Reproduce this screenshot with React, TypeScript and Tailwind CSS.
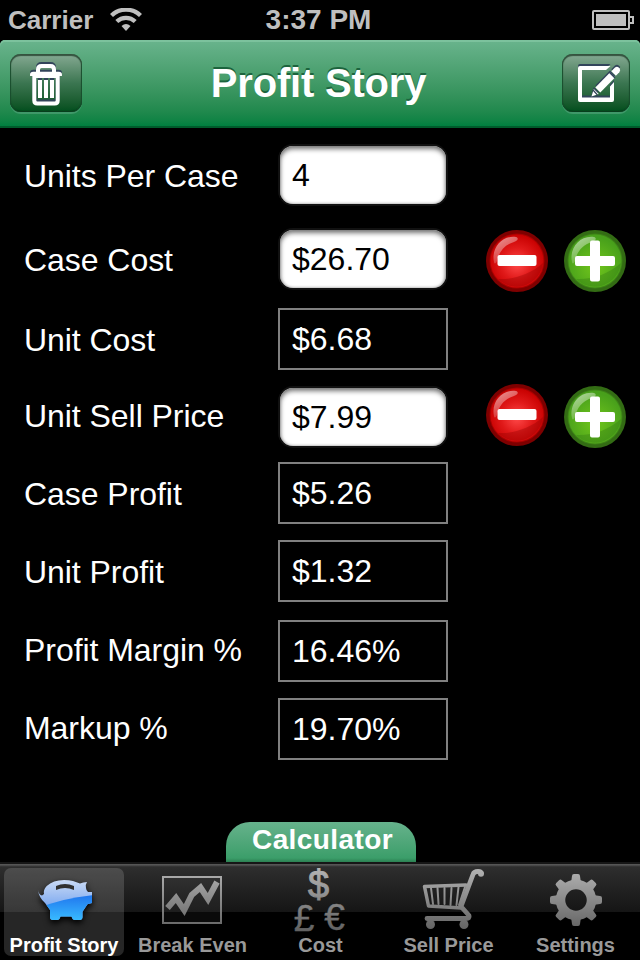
import type { ReactNode } from 'react';

type Row = {
  label: string;
  value: string;
  editable?: boolean;
  rowClass: string;
  labelClass: string;
  minusClass?: string;
  plusClass?: string;
};

const rows: Row[] = [
  { label: 'Units Per Case', value: '4', editable: true, rowClass: 'mt-4', labelClass: 'pt-0.5' },
  { label: 'Case Cost', value: '$26.70', editable: true, rowClass: 'mt-[22px]', labelClass: 'pt-0.5', minusClass: 'mt-1', plusClass: 'mt-1' },
  { label: 'Unit Cost', value: '$6.68', rowClass: 'mt-[18px]', labelClass: 'pt-0.5' },
  { label: 'Unit Sell Price', value: '$7.99', editable: true, rowClass: 'mt-4', labelClass: 'pb-0.5', minusClass: '-mt-1', plusClass: 'mt-0' },
  { label: 'Case Profit', value: '$5.26', rowClass: 'mt-3.5', labelClass: 'pt-0.5' },
  { label: 'Unit Profit', value: '$1.32', rowClass: 'mt-4', labelClass: 'pt-0.5' },
  { label: 'Profit Margin %', value: '16.46%', rowClass: 'mt-[18px]', labelClass: 'pb-0.5' },
  { label: 'Markup %', value: '19.70%', rowClass: 'mt-4', labelClass: 'pb-0.5' },
];

const Gradients = () => (
  <svg width="0" height="0" className="absolute">
    <defs>
      <linearGradient id="tabGray" gradientUnits="userSpaceOnUse" x1="0" y1="868" x2="0" y2="932">
        <stop offset="0" stopColor="#b4b4b4" />
        <stop offset="1" stopColor="#606060" />
      </linearGradient>
      <linearGradient id="pigTop" gradientUnits="userSpaceOnUse" x1="0" y1="879" x2="0" y2="906">
        <stop offset="0" stopColor="#cddcf5" />
        <stop offset="1" stopColor="#7eaaf0" />
      </linearGradient>
      <linearGradient id="pigBottom" gradientUnits="userSpaceOnUse" x1="0" y1="895" x2="0" y2="920">
        <stop offset="0" stopColor="#2076ee" />
        <stop offset="1" stopColor="#38baff" />
      </linearGradient>
      <radialGradient id="redBall" cx="0.5" cy="0.55" r="0.55">
        <stop offset="0" stopColor="#ff4a4a" />
        <stop offset="0.55" stopColor="#e01919" />
        <stop offset="1" stopColor="#c80000" />
      </radialGradient>
      <radialGradient id="greenBall" cx="0.5" cy="0.6" r="0.55">
        <stop offset="0" stopColor="#71c61c" />
        <stop offset="1" stopColor="#48a01b" />
      </radialGradient>
      <linearGradient id="gloss" x1="0" y1="0.1" x2="0.5" y2="1">
        <stop offset="0" stopColor="#fff" stopOpacity="0.6" />
        <stop offset="1" stopColor="#fff" stopOpacity="0.08" />
      </linearGradient>
    </defs>
  </svg>
);

const RoundButton = ({ kind, className = '' }: { kind: 'minus' | 'plus'; className?: string }) => {
  const minus = kind === 'minus';
  return (
    <button className={`shrink-0 ${className}`} aria-label={kind}>
      <svg width="62" height="62" viewBox="0 0 62 62" className="block">
        <circle cx="31" cy="31" r="31" fill={minus ? '#7e0000' : '#336c14'} />
        <circle cx="31" cy="31" r="27.5" fill={minus ? '#a90000' : '#3d8516'} />
        <circle cx="31" cy="31" r="26.5" fill={minus ? 'url(#redBall)' : 'url(#greenBall)'} />
        <path d="M12 49C27 50 45 44 57 33a26.500 26.500 0 0 1-45 16Z" fill={minus ? '#8f0000' : '#2f7510'} opacity="0.35" />
        <path d="M8 32C5 18 16 5 30 7c3 1 2 4-2 5C18 15 13 22 11 31c-1 3-3 3-3 1Z" fill="url(#gloss)" />
        {minus ? (
          <rect x="11.500" y="25" width="39" height="11" rx="2" fill="#fff" />
        ) : (
          <path d="M28 10.500h6a2 2 0 0 1 2 2V26h13a2 2 0 0 1 2 2v6a2 2 0 0 1-2 2H36v13.500a2 2 0 0 1-2 2h-6a2 2 0 0 1-2-2V36H13a2 2 0 0 1-2-2v-6a2 2 0 0 1 2-2h13V12.500a2 2 0 0 1 2-2Z" fill="#fff" />
        )}
      </svg>
    </button>
  );
};

const TrashShape = ({ color }: { color: string }) => (
  <g fill="none" stroke={color}>
    <path d="M28 19v-3.500q0-3.500 3.500-3.500h9q3.500 0 3.500 3.500V19" strokeWidth="4" />
    <path d="M21.800 22v-1.500q0-1 1.500-1h25.400q1.500 0 1.500 1V22" strokeWidth="3.500" />
    <path d="M24.300 20v26.500q0 3 3 3h17.400q3 0 3-3V20" strokeWidth="4" />
    <path d="M24 22h24" strokeWidth="4" />
    <path d="M30 26v18M36 26v18M42 26v18" strokeWidth="4" />
  </g>
);

const ComposeShape = ({ color }: { color: string }) => (
  <g>
    <path d="M48.500 12l-4.500 4H20v27.500h28V32.500l4-4.500V46q0 2-2 2H18q-2 0-2-2V14q0-2 2-2Z" fill={color} />
    <path d="M29.500 42.500l2.300-7.500 5 5Z" fill={color} />
    <path d="M33.300 33.500L48 18.500l5 5L38.300 38.500Z" fill={color} />
    <path d="M49.300 17.200l3.700-3.700q2-1.500 3.700 0l.8.8q1.500 2-.2 3.900l-3.400 3.600Z" fill={color} />
  </g>
);

const NavButton = ({ width, label, children }: { width: string; label: string; children: ReactNode }) => (
  <button
    aria-label={label}
    className={`h-[58px] ${width} rounded-[11px] bg-gradient-to-b from-[#86aa94] via-[#3b7651] to-[#004e1d] shadow-[inset_0_2px_1px_#35533f,inset_1px_0_1px_#174d2c,inset_-1px_0_1px_#174d2c,inset_0_-1px_1px_#063b1b,0_2px_0_#3f9869]`}
  >
    {children}
  </button>
);

const StatusBar = () => (
  <div className="flex h-10 items-center text-[#bfbfbf]">
    <div className="flex w-[220px] items-center pl-2">
      <span className="text-[26px] leading-10 font-bold">Carrier</span>
      <svg width="32" height="24" viewBox="0 0 32 24" className="ml-[17px] shrink-0">
        <path d="M1.500 7.500a21 21 0 0 1 29 0" fill="none" stroke="currentColor" strokeWidth="4.300" />
        <path d="M6.800 13.600a13.300 13.300 0 0 1 18.400 0" fill="none" stroke="currentColor" strokeWidth="4.200" />
        <path d="M11.500 18q4.500-4 9 0L16 23Z" fill="currentColor" />
      </svg>
    </div>
    <div className="w-[200px] pr-[3px] text-center text-[28px] leading-10 font-bold">3:37 PM</div>
    <div className="flex w-[220px] justify-end pr-1.5">
      <svg width="42" height="20" viewBox="0 0 42 20">
        <rect x="1" y="1" width="36" height="18" rx="1" fill="none" stroke="currentColor" strokeWidth="2" />
        <rect x="4" y="4" width="30" height="12" fill="currentColor" />
        <path d="M38 7h3v6h-3" fill="none" stroke="currentColor" strokeWidth="2" />
      </svg>
    </div>
  </div>
);

const NavBar = () => (
  <div className="flex h-[88px] items-start justify-between rounded-t-[5px] border-b-2 border-[#005c2c] bg-gradient-to-b from-[#69b48d] to-[#008040] px-2.5 pt-3.5 shadow-[inset_0_2px_0_#7cc29d]">
    <NavButton width="w-[72px]" label="Delete">
      <svg width="72" height="58" viewBox="0 0 72 58">
        <g transform="translate(0 -2)"><TrashShape color="#32445a" /></g>
        <TrashShape color="#fff" />
      </svg>
    </NavButton>
    <h1 className="pr-[7px] text-[40px] leading-[58px] font-bold tracking-[-0.2px] text-white [text-shadow:0_-2px_0_#1c643d]">Profit Story</h1>
    <NavButton width="w-[68px]" label="Edit">
      <svg width="68" height="58" viewBox="0 0 68 58">
        <g transform="translate(0 -2)"><ComposeShape color="#32445a" /></g>
        <ComposeShape color="#fff" />
        <path d="M31 36l4.500 5M47 18l6 6" stroke="#32445a" strokeWidth="1.200" fill="none" />
      </svg>
    </NavButton>
  </div>
);

const FieldRow = ({ row }: { row: Row }) => (
  <div className={`flex h-[62px] items-center ${row.rowClass}`}>
    <div className={`w-[254px] text-[32px] leading-[60px] tracking-[-0.05px] text-white ${row.labelClass}`}>{row.label}</div>
    {row.editable ? (
      <div className="mx-0.5 h-[58px] w-[166px] rounded-[13px] bg-white pl-3 text-[32px] leading-[58px] text-black shadow-[inset_0_3px_5px_#777,inset_0_0_3px_#999,0_0_0_2px_#111]">
        {row.value}
      </div>
    ) : (
      <div className="h-[62px] w-[170px] border-2 border-[#808080] pl-3 text-[32px] leading-[58px] text-white">{row.value}</div>
    )}
    {row.minusClass && (
      <div className="ml-[38px] flex gap-4">
        <RoundButton kind="minus" className={row.minusClass} />
        <RoundButton kind="plus" className={row.plusClass} />
      </div>
    )}
  </div>
);

const pigPath =
  'M38 890q1 5 4 5.500l2-1.500q-1-4 2.700-8Q53 880 64 880q5 0 9 1l7 2.500q3-1.500 7-1.500-2 3-1 6 0 2 2 4h4v11l-4.500 1.200-5 7.500V917q0 3-3 3h-4.500q-2.500 0-3.500-3.500H60.500q-1 3.500-3.500 3.500h-4q-3 0-3-3v-7l-5-7q-6-5-7-13Z';

const PiggyIcon = () => (
  <g className="drop-shadow-[0_3px_3px_#000]">
    <path d={pigPath} fill="url(#pigTop)" />
    <clipPath id="pigClip">
      <path d={pigPath} />
    </clipPath>
    <path d="M36 909Q62 898 94 895v28H36Z" fill="url(#pigBottom)" clipPath="url(#pigClip)" />
    <path d="M56 886q9-4 18 0v4q-9-4-18 0Z" fill="#303030" />
  </g>
);

const ChartIcon = () => (
  <g fill="none" stroke="url(#tabGray)">
    <path d="M163 877h58v46h-58Z" fill="#fff" fillOpacity="0.04" strokeWidth="2" />
    <path d="M167.500 908l8.500-10 8.200 12 7.600-15 8.700-7.500 7.500 11.500 9-17" strokeWidth="6" />
  </g>
);

const CurrencyIcon = () => (
  <g fill="url(#tabGray)">
    <text x="318.500" y="897.500" textAnchor="middle" fontSize="38" stroke="url(#tabGray)" strokeWidth="1">$</text>
    <text x="304" y="930.500" textAnchor="middle" fontSize="37" stroke="url(#tabGray)" strokeWidth="0.400">£</text>
    <text x="334.500" y="930" textAnchor="middle" fontSize="37" stroke="url(#tabGray)" strokeWidth="0.400">€</text>
  </g>
);

const CartIcon = () => (
  <g fill="none" stroke="url(#tabGray)" strokeLinecap="round" strokeLinejoin="round">
    <path d="M481 873.500q0-2-3-2-4 0-5 3l-12 32 8 9q1 3-3 3h-39" strokeWidth="4.800" />
    <path d="M466 885l-41.500 1.500 4 19.500 33 2" strokeWidth="3.500" />
    <path d="M431 888l2 16M437.500 888l1 16M444.500 888v16M451.500 888l-1 17M458.500 887l-2 18M465 887l-6 18" strokeWidth="2" />
    <path d="M481 873.500v.2" strokeWidth="6" />
    <circle cx="430.500" cy="924.500" r="4.500" fill="url(#tabGray)" stroke="none" />
    <circle cx="464" cy="924.500" r="4.500" fill="url(#tabGray)" stroke="none" />
  </g>
);

const teeth = [0, 45, 90, 135, 180, 225, 270, 315];

const GearIcon = () => (
  <>
    <mask id="gearMask" maskUnits="userSpaceOnUse" x="545" y="870" width="62" height="62">
      <circle cx="576" cy="900" r="15.500" fill="none" stroke="#fff" strokeWidth="9.500" />
      {teeth.map((deg) => (
        <path key={deg} d="M571 883l1-7q0-2 2-2h4q2 0 2 2l1 7Z" fill="#fff" transform={`rotate(${deg} 576 900)`} />
      ))}
    </mask>
    <rect x="548" y="872" width="56" height="56" fill="url(#tabGray)" mask="url(#gearMask)" />
  </>
);

const tabs = [
  { label: 'Profit Story', viewBox: '4 868 120 66', icon: <PiggyIcon />, active: true },
  { label: 'Break Even', viewBox: '132 868 120 66', icon: <ChartIcon /> },
  { label: 'Cost', viewBox: '260 868 120 66', icon: <CurrencyIcon /> },
  { label: 'Sell Price', viewBox: '388 868 120 66', icon: <CartIcon /> },
  { label: 'Settings', viewBox: '515 868 120 66', icon: <GearIcon /> },
];

const TabBar = () => (
  <div className="flex h-[98px] border-t-2 border-[#161616] bg-[linear-gradient(to_bottom,#555_0,#555_1px,#3c3c3c_2px,#2e2e2e_3px,#151515_48px,#000_48px)] pt-1">
    {tabs.map((tab) => (
      <button
        key={tab.label}
        className={`mx-1 flex h-[88px] w-[120px] shrink-0 flex-col items-center rounded-[7px] last:ml-[3px] ${tab.active ? 'bg-white/15' : ''}`}
      >
        <svg width="120" height="66" viewBox={tab.viewBox} className="shrink-0 overflow-visible">
          {tab.icon}
        </svg>
        <span className={`text-[20px] leading-[22px] font-bold whitespace-nowrap ${tab.active ? 'text-white' : 'pl-px text-[#999]'}`}>
          {tab.label}
        </span>
      </button>
    ))}
  </div>
);

const App = () => (
  <div className="flex h-[960px] w-[640px] flex-col overflow-hidden bg-black font-['Liberation_Sans',Arial,sans-serif]">
    <Gradients />
    <StatusBar />
    <NavBar />
    <main className="flex flex-1 flex-col pl-6">
      {rows.map((row) => (
        <FieldRow key={row.label} row={row} />
      ))}
      <button className="mt-auto ml-[202px] h-10 w-[190px] rounded-t-[24px] bg-gradient-to-b from-[#66b28c] via-[#3b9e6a] via-90% to-[#2c8052] pb-1 pl-[3px] text-[28px] leading-[36px] font-bold tracking-[0.4px] text-white">
        Calculator
      </button>
    </main>
    <TabBar />
  </div>
);

export default App;
